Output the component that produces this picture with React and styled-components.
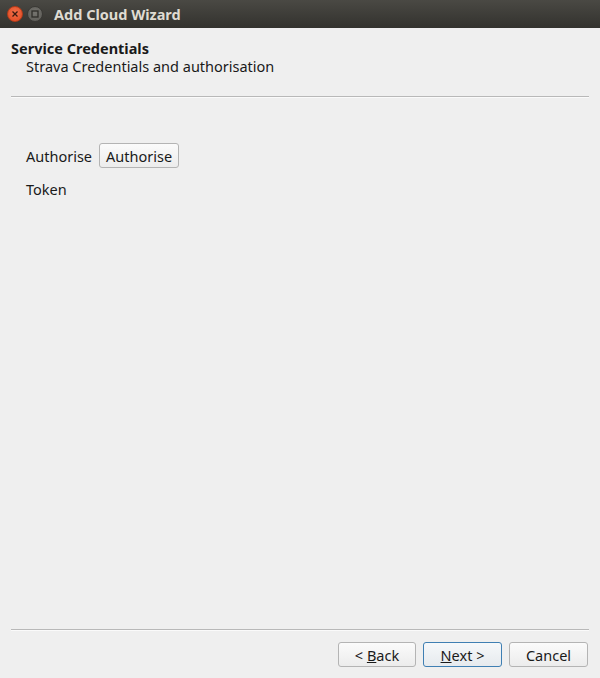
import React from 'react';
import styled, { createGlobalStyle } from 'styled-components';

const Global = createGlobalStyle`
  html, body { margin: 0; padding: 0; }
  body {
    background: #efefef;
    font-family: "Noto Sans", "DejaVu Sans", sans-serif;
    font-size: 14.5px;
    color: #1a1a1a;
  }
`;

const Window = styled.div`
  width: 600px;
  height: 678px;
  display: flex;
  flex-direction: column;
  background: #efefef;
  overflow: hidden;
`;

const TitleBar = styled.div`
  height: 28px;
  flex: none;
  display: flex;
  align-items: center;
  padding-left: 7px;
  gap: 4px;
  background: linear-gradient(#4a4944, #33322e);
  color: #dfdbd2;
  font-weight: bold;
  font-size: 14.5px;
`;

const WinButton = styled.div`
  width: 14px;
  height: 14px;
  border-radius: 50%;
  display: flex;
  align-items: center;
  justify-content: center;
  background: ${p => (p.$close ? 'radial-gradient(circle at 50% 40%, #f3704a, #e0471f)' : 'radial-gradient(circle at 50% 40%, #75746f, #5a5954)')};
  border: 1px solid ${p => (p.$close ? '#b53c19' : '#3a3935')};
`;

const Title = styled.span`
  margin-left: 7px;
`;

const Header = styled.div`
  padding: 11px 11px 0 11px;
  flex: none;
`;

const HeaderTitle = styled.div`
  font-weight: bold;
  line-height: 18px;
`;

const HeaderSub = styled.div`
  padding-left: 15px;
  line-height: 19px;
`;

const Rule = styled.div`
  margin: ${p => p.$margin};
  height: 1px;
  background: #b8b8b8;
  border-bottom: 1px solid #fafafa;
  flex: none;
`;

const Form = styled.div`
  flex: 1;
  padding: 45px 26px 0 26px;
  display: flex;
  flex-direction: column;
  gap: 8px;
`;

const FormRow = styled.div`
  display: flex;
  align-items: center;
  gap: 7px;
  height: 25px;
`;

const Button = styled.button`
  font-family: inherit;
  font-size: 14.5px;
  color: #1a1a1a;
  height: 25px;
  padding: 0 6px;
  width: ${p => p.$width || 'auto'};
  border-radius: 3px;
  border: 1px solid ${p => (p.$default ? '#3f7fb3' : '#b4b4b4')};
  background: ${p => (p.$default ? 'linear-gradient(#f6f8fa, #e6eaee)' : 'linear-gradient(#fbfbfb, #ececec)')};
  text-align: center;
  white-space: pre;
  box-sizing: border-box;
  cursor: default;
`;

const Footer = styled.div`
  flex: none;
  display: flex;
  justify-content: flex-end;
  gap: 7px;
  padding: 11px 12px 11px 11px;
`;

const U = styled.span`
  text-decoration: underline;
`;

export default function App() {
  return (
    <Window>
      <Global />
      <TitleBar>
        <WinButton $close>
          <svg width="8" height="8" viewBox="0 0 8 8">
            <path d="M1.5 1.5 L6.5 6.5 M6.5 1.5 L1.5 6.5" stroke="#3a1a10" strokeWidth="1.3" />
          </svg>
        </WinButton>
        <WinButton>
          <svg width="8" height="8" viewBox="0 0 8 8">
            <rect x="1" y="1" width="6" height="6" fill="none" stroke="#2e2d29" strokeWidth="1.3" />
          </svg>
        </WinButton>
        <Title>Add Cloud Wizard</Title>
      </TitleBar>
      <Header>
        <HeaderTitle>Service Credentials</HeaderTitle>
        <HeaderSub>Strava Credentials and authorisation</HeaderSub>
      </Header>
      <Rule $margin="20px 11px 0 11px" />
      <Form>
        <FormRow>
          <span>Authorise</span>
          <Button $width="80px">Authorise</Button>
        </FormRow>
        <FormRow>
          <span>Token</span>
        </FormRow>
      </Form>
      <Rule $margin="0 11px" />
      <Footer>
        <Button $width="78px">{'< '}<U>B</U>ack</Button>
        <Button $width="79px" $default><U>N</U>{'ext >'}</Button>
        <Button $width="79px">Cancel</Button>
      </Footer>
    </Window>
  );
}
